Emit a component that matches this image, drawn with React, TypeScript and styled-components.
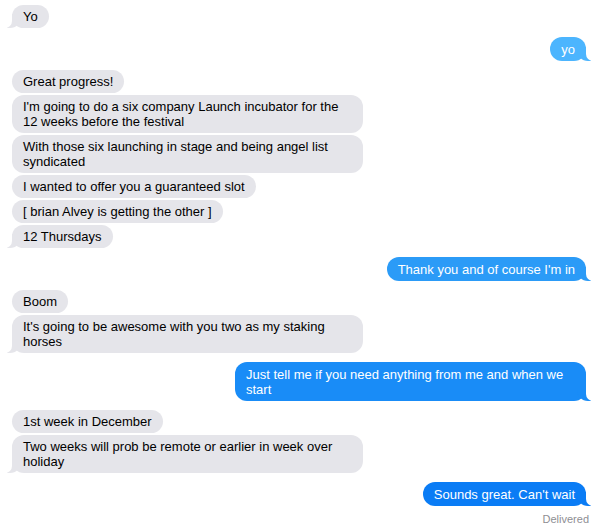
import React from 'react';
import styled, { createGlobalStyle, css } from 'styled-components';

const GlobalStyle = createGlobalStyle`
  html, body { margin: 0; padding: 0; background: #ffffff; }
  body { font-family: "Liberation Sans", Helvetica, Arial, sans-serif; }
`;

const GRAY = '#e5e5ea';

type Side = 'in' | 'out';

interface Msg {
  side: Side;
  text: string;
  color?: string;
}

// groupes de messages consécutifs du même côté
const groups: Msg[][] = [
  [{ side: 'in', text: 'Yo' }],
  [{ side: 'out', text: 'yo', color: '#4cb5fe' }],
  [
    { side: 'in', text: 'Great progress!' },
    { side: 'in', text: "I'm going to do a six company Launch incubator for the 12 weeks before the festival" },
    { side: 'in', text: 'With those six launching in stage and being angel list syndicated' },
    { side: 'in', text: 'I wanted to offer you a guaranteed slot' },
    { side: 'in', text: '[ brian Alvey is getting the other ]' },
    { side: 'in', text: '12 Thursdays' },
  ],
  [{ side: 'out', text: "Thank you and of course I'm in", color: '#2b9bf7' }],
  [
    { side: 'in', text: 'Boom' },
    { side: 'in', text: "It's going to be awesome with you two as my staking horses" },
  ],
  [{ side: 'out', text: 'Just tell me if you need anything from me and when we start', color: '#198cf7' }],
  [
    { side: 'in', text: '1st week in December' },
    { side: 'in', text: 'Two weeks will prob be remote or earlier in week over holiday' },
  ],
  [{ side: 'out', text: "Sounds great. Can't wait", color: '#0a7cf5' }],
];

const Thread = styled.div`
  display: flex;
  flex-direction: column;
  gap: 9px;
  padding: 5px 14px 0 12px;
`;

const Group = styled.div<{ $side: Side }>`
  display: flex;
  flex-direction: column;
  align-items: ${(p) => (p.$side === 'out' ? 'flex-end' : 'flex-start')};
  gap: 2px;
`;

const tailIn = css`
  &::before {
    content: '';
    position: absolute;
    z-index: -1;
    bottom: 0;
    left: -5px;
    width: 14px;
    height: 14px;
    background: ${GRAY};
    border-bottom-right-radius: 11px;
  }
  &::after {
    content: '';
    position: absolute;
    z-index: -1;
    bottom: 0;
    left: -9px;
    width: 9px;
    height: 14px;
    background: #fff;
    border-bottom-right-radius: 7px;
  }
`;

const tailOut = (color: string) => css`
  &::before {
    content: '';
    position: absolute;
    z-index: -1;
    bottom: 0;
    right: -5px;
    width: 14px;
    height: 14px;
    background: ${color};
    border-bottom-left-radius: 11px;
  }
  &::after {
    content: '';
    position: absolute;
    z-index: -1;
    bottom: 0;
    right: -9px;
    width: 9px;
    height: 14px;
    background: #fff;
    border-bottom-left-radius: 7px;
  }
`;

const Bubble = styled.div<{ $side: Side; $color: string; $tail: boolean }>`
  position: relative;
  z-index: 0;
  max-width: 329px;
  padding: ${(p) => (p.$side === 'out' ? '5px 11px 4px' : '4px 11px')};
  border-radius: 12px;
  font-size: 13px;
  line-height: 15px;
  background: ${(p) => p.$color};
  color: ${(p) => (p.$side === 'out' ? '#ffffff' : '#000000')};
  ${(p) => p.$tail && (p.$side === 'out' ? tailOut(p.$color) : tailIn)}
`;

const Status = styled.div`
  align-self: flex-end;
  margin: 5px -3px 0 0;
  font-size: 11px;
  line-height: 13px;
  color: #8e8e93;
`;

export default function App() {
  return (
    <>
      <GlobalStyle />
      <Thread>
        {groups.map((g, gi) => (
          <Group key={gi} $side={g[0].side}>
            {g.map((m, i) => (
              <Bubble
                key={i}
                $side={m.side}
                $color={m.color ?? GRAY}
                $tail={i === g.length - 1}
              >
                {m.text}
              </Bubble>
            ))}
            {gi === groups.length - 1 && <Status>Delivered</Status>}
          </Group>
        ))}
      </Thread>
    </>
  );
}
